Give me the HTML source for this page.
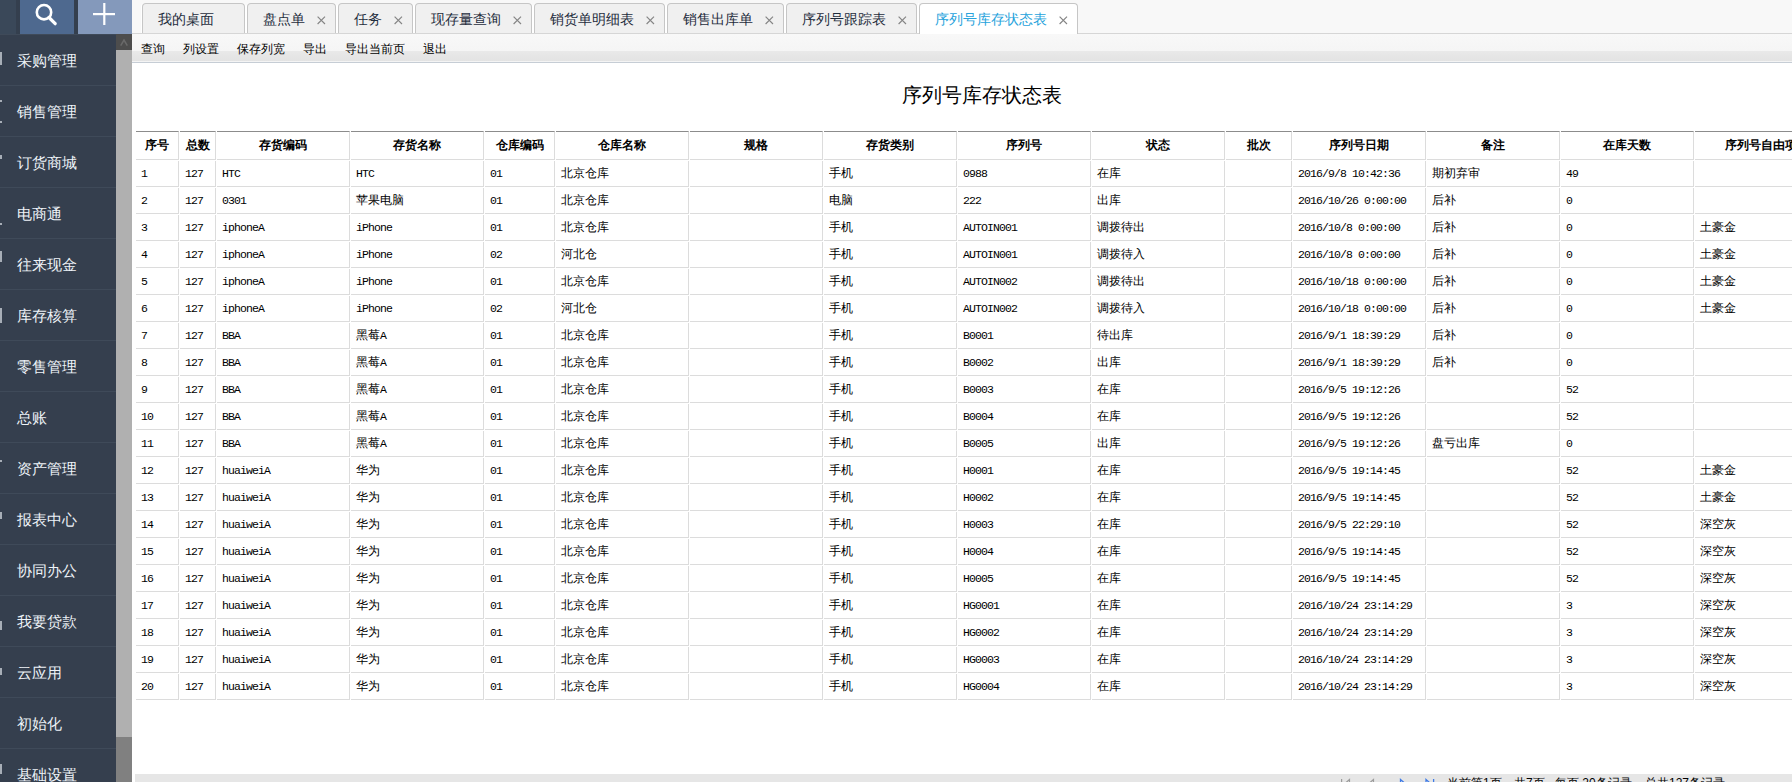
<!DOCTYPE html><html><head><meta charset="utf-8"><title>序列号库存状态表</title><style>
*{box-sizing:border-box}
html,body{margin:0;padding:0}
body{width:1792px;height:782px;overflow:hidden;position:relative;background:#fff;font-family:"Liberation Sans",sans-serif}
.abs{position:absolute}
#hdl{left:0;top:0;width:16px;height:34px;background:#3a4859}
#hdg{left:16px;top:0;width:116px;height:34px;background:#343f4e}
#srch{left:20px;top:0;width:54px;height:34px;background:#4e698f}
#plus{left:78px;top:0;width:54px;height:34px;background:#8499bb}
#side{left:0;top:34px;width:116px;height:748px;background:#353f4e;overflow:hidden}
#side .it{position:absolute;left:0;width:116px;height:51px;border-top:1px solid #3f4a59}
#side .it>span{position:absolute;left:17px;top:17px;font-size:15px;line-height:17px;color:#eef3f8;white-space:nowrap}
.frag{position:absolute;left:0;width:2px;background:#c4cad2;opacity:.8}
#sb{left:116px;top:34px;width:16px;height:748px;background:#b0b0b0}
#sbup{left:116px;top:34px;width:16px;height:16px;background:#4d4d4d}
#sbtr{left:116px;top:737px;width:16px;height:45px;background:#808080}
#tabbar{left:132px;top:0;width:1660px;height:34px;background:#f8f8f8;border-bottom:1px solid #d6d6d6}
.tab{position:absolute;top:3px;height:30px;border:1px solid #c6c6c6;border-bottom:none;border-radius:4px 4px 0 0;background:#f0f0f0;box-shadow:-1px 0 0 #fff,1px 0 0 #fff}
.tab>span{position:absolute;left:15px;top:7px;font-size:14px;line-height:16px;color:#1f2d3d;white-space:nowrap}
.tab.act{background:#fff;height:31px;box-shadow:none}
.tab.act>span{color:#27a3dc}
.tab svg{position:absolute;top:12px}
#tool{left:132px;top:34px;width:1660px;height:29px;background:linear-gradient(#f8f8f8 0,#f5f5f5 17px,#e9e9e9 17px,#e3e3e3 27px,#f4f4f4 27px,#f4f4f4 28px);border-bottom:1px solid #c6cdd5}
#tool>span{position:absolute;top:9px;font-size:12px;line-height:13px;color:#000;white-space:nowrap}
#title{left:862px;top:84px;width:240px;text-align:center;font-size:20px;line-height:22px;color:#000;white-space:nowrap}
#tbl{position:absolute;left:135px;top:130px;width:1694px;border-collapse:separate;border-spacing:1px;table-layout:fixed}
#tbl td,#tbl th{padding:0 0 0 5px;border-right:1px solid #dcdcdc;border-bottom:1px solid #dcdcdc;white-space:nowrap;overflow:hidden;font-size:12px;color:#000;text-align:left;vertical-align:middle}
#tbl th{height:29px;border-top:1px solid #8c8c8c;text-align:center;padding:0;font-weight:bold;line-height:27px}
#tbl td{height:26px;line-height:25px}
#tbl b{line-height:12px}
#tbl b{font-weight:normal;font-family:"Liberation Mono",monospace;font-size:11.5px;letter-spacing:-0.9px}
#pager{left:135px;top:774px;width:1657px;height:8px;background:#e6e6e6}
.nocjk .c{letter-spacing:.25em;-webkit-text-stroke:.6px currentColor;position:relative;left:.125em}
.nocjk #tbl th .c,.nocjk #title .c{margin-right:-.25em;left:0}
#pager>span{position:absolute;top:3px;font-size:12px;line-height:13px;color:#000;white-space:nowrap}
</style></head><body>
<script>(function(){var d=document,m=d.createElement("span");m.style.cssText="position:absolute;visibility:hidden;font:100px Liberation Sans;white-space:nowrap";m.textContent="\u4e2d\u4e2d\u4e2d\u4e2d";d.body.appendChild(m);if(m.getBoundingClientRect().width<350)d.documentElement.className="nocjk";d.body.removeChild(m)})();</script>
<div class="abs" id="hdg"></div><div class="abs" id="hdl"></div>
<div class="abs" id="srch"><svg width="54" height="34" viewBox="0 0 54 34"><circle cx="24" cy="12.2" r="7.2" fill="none" stroke="#fff" stroke-width="2.6"/><line x1="29" y1="17.5" x2="35.2" y2="23.7" stroke="#fff" stroke-width="3.2" stroke-linecap="round"/></svg></div>
<div class="abs" id="plus"><svg width="54" height="34" viewBox="0 0 54 34"><rect x="25.2" y="3" width="2.2" height="22" fill="#fff"/><rect x="15" y="13" width="22" height="2.2" fill="#fff"/></svg></div>
<div class="abs" id="side">
<div class="it" style="top:0px"><span><span class="c">采购管理</span></span></div>
<div class="it" style="top:51px"><span><span class="c">销售管理</span></span></div>
<div class="it" style="top:102px"><span><span class="c">订货商城</span></span></div>
<div class="it" style="top:153px"><span><span class="c">电商通</span></span></div>
<div class="it" style="top:204px"><span><span class="c">往来现金</span></span></div>
<div class="it" style="top:255px"><span><span class="c">库存核算</span></span></div>
<div class="it" style="top:306px"><span><span class="c">零售管理</span></span></div>
<div class="it" style="top:357px"><span><span class="c">总账</span></span></div>
<div class="it" style="top:408px"><span><span class="c">资产管理</span></span></div>
<div class="it" style="top:459px"><span><span class="c">报表中心</span></span></div>
<div class="it" style="top:510px"><span><span class="c">协同办公</span></span></div>
<div class="it" style="top:561px"><span><span class="c">我要贷款</span></span></div>
<div class="it" style="top:612px"><span><span class="c">云应用</span></span></div>
<div class="it" style="top:663px"><span><span class="c">初始化</span></span></div>
<div class="it" style="top:714px"><span><span class="c">基础设置</span></span></div>
<div class="frag" style="top:18px;height:13px"></div>
<div class="frag" style="top:66px;height:2px"></div>
<div class="frag" style="top:87px;height:2px"></div>
<div class="frag" style="top:121px;height:4px"></div>
<div class="frag" style="top:189px;height:2px"></div>
<div class="frag" style="top:217px;height:11px"></div>
<div class="frag" style="top:274px;height:15px"></div>
<div class="frag" style="top:426px;height:2px"></div>
<div class="frag" style="top:478px;height:7px"></div>
<div class="frag" style="top:587px;height:9px"></div>
<div class="frag" style="top:634px;height:7px"></div>
<div class="frag" style="top:730px;height:10px"></div>
</div>
<div class="abs" id="sb"></div><div class="abs" id="sbup"><svg width="16" height="16"><polyline points="4.7,11.6 8,6 11.3,11.6" fill="none" stroke="#6a6a6a" stroke-width="1.5"/></svg></div><div class="abs" id="sbtr"></div>
<div class="abs" id="tabbar"></div>
<div class="tab" style="left:142px;width:103px"><span><span class="c">我的桌面</span></span></div>
<div class="tab" style="left:247px;width:89px"><span><span class="c">盘点单</span></span><svg style="left:69px" width="9" height="9" viewBox="0 0 9 9"><path d="M0.6 0.6L8 8M8 0.6L0.6 8" stroke="#858585" stroke-width="1.15"/></svg></div>
<div class="tab" style="left:338px;width:75px"><span><span class="c">任务</span></span><svg style="left:55px" width="9" height="9" viewBox="0 0 9 9"><path d="M0.6 0.6L8 8M8 0.6L0.6 8" stroke="#858585" stroke-width="1.15"/></svg></div>
<div class="tab" style="left:415px;width:117px"><span><span class="c">现存量查询</span></span><svg style="left:97px" width="9" height="9" viewBox="0 0 9 9"><path d="M0.6 0.6L8 8M8 0.6L0.6 8" stroke="#858585" stroke-width="1.15"/></svg></div>
<div class="tab" style="left:534px;width:131px"><span><span class="c">销货单明细表</span></span><svg style="left:111px" width="9" height="9" viewBox="0 0 9 9"><path d="M0.6 0.6L8 8M8 0.6L0.6 8" stroke="#858585" stroke-width="1.15"/></svg></div>
<div class="tab" style="left:667px;width:117px"><span><span class="c">销售出库单</span></span><svg style="left:97px" width="9" height="9" viewBox="0 0 9 9"><path d="M0.6 0.6L8 8M8 0.6L0.6 8" stroke="#858585" stroke-width="1.15"/></svg></div>
<div class="tab" style="left:786px;width:131px"><span><span class="c">序列号跟踪表</span></span><svg style="left:111px" width="9" height="9" viewBox="0 0 9 9"><path d="M0.6 0.6L8 8M8 0.6L0.6 8" stroke="#858585" stroke-width="1.15"/></svg></div>
<div class="tab act" style="left:919px;width:159px"><span><span class="c">序列号库存状态表</span></span><svg style="left:139px" width="9" height="9" viewBox="0 0 9 9"><path d="M0.6 0.6L8 8M8 0.6L0.6 8" stroke="#858585" stroke-width="1.15"/></svg></div>
<div class="abs" style="left:918px;top:3px;width:1px;height:30px;background:#fff"></div>
<div class="abs" id="tool">
<span style="left:9px"><span class="c">查询</span></span>
<span style="left:51px"><span class="c">列设置</span></span>
<span style="left:105px"><span class="c">保存列宽</span></span>
<span style="left:171px"><span class="c">导出</span></span>
<span style="left:213px"><span class="c">导出当前页</span></span>
<span style="left:291px"><span class="c">退出</span></span>
</div>
<div class="abs" id="title"><span class="c">序列号库存状态表</span></div>
<table id="tbl"><colgroup>
<col style="width:43px">
<col style="width:36px">
<col style="width:133px">
<col style="width:133px">
<col style="width:70px">
<col style="width:133px">
<col style="width:133px">
<col style="width:133px">
<col style="width:133px">
<col style="width:133px">
<col style="width:66px">
<col style="width:133px">
<col style="width:133px">
<col style="width:133px">
<col style="width:133px">
</colgroup><tr>
<th><span class="c">序号</span></th>
<th><span class="c">总数</span></th>
<th><span class="c">存货编码</span></th>
<th><span class="c">存货名称</span></th>
<th><span class="c">仓库编码</span></th>
<th><span class="c">仓库名称</span></th>
<th><span class="c">规格</span></th>
<th><span class="c">存货类别</span></th>
<th><span class="c">序列号</span></th>
<th><span class="c">状态</span></th>
<th><span class="c">批次</span></th>
<th><span class="c">序列号日期</span></th>
<th><span class="c">备注</span></th>
<th><span class="c">在库天数</span></th>
<th><span class="c">序列号自由项</span></th>
</tr>
<tr><td><b>1</b></td><td><b>127</b></td><td><b>HTC</b></td><td><b>HTC</b></td><td><b>01</b></td><td><span class="c">北京仓库</span></td><td></td><td><span class="c">手机</span></td><td><b>0988</b></td><td><span class="c">在库</span></td><td></td><td><b>2016/9/8 10:42:36</b></td><td><span class="c">期初弃审</span></td><td><b>49</b></td><td></td></tr>
<tr><td><b>2</b></td><td><b>127</b></td><td><b>0301</b></td><td><span class="c">苹果电脑</span></td><td><b>01</b></td><td><span class="c">北京仓库</span></td><td></td><td><span class="c">电脑</span></td><td><b>222</b></td><td><span class="c">出库</span></td><td></td><td><b>2016/10/26 0:00:00</b></td><td><span class="c">后补</span></td><td><b>0</b></td><td></td></tr>
<tr><td><b>3</b></td><td><b>127</b></td><td><b>iphoneA</b></td><td><b>iPhone</b></td><td><b>01</b></td><td><span class="c">北京仓库</span></td><td></td><td><span class="c">手机</span></td><td><b>AUTOIN001</b></td><td><span class="c">调拨待出</span></td><td></td><td><b>2016/10/8 0:00:00</b></td><td><span class="c">后补</span></td><td><b>0</b></td><td><span class="c">土豪金</span></td></tr>
<tr><td><b>4</b></td><td><b>127</b></td><td><b>iphoneA</b></td><td><b>iPhone</b></td><td><b>02</b></td><td><span class="c">河北仓</span></td><td></td><td><span class="c">手机</span></td><td><b>AUTOIN001</b></td><td><span class="c">调拨待入</span></td><td></td><td><b>2016/10/8 0:00:00</b></td><td><span class="c">后补</span></td><td><b>0</b></td><td><span class="c">土豪金</span></td></tr>
<tr><td><b>5</b></td><td><b>127</b></td><td><b>iphoneA</b></td><td><b>iPhone</b></td><td><b>01</b></td><td><span class="c">北京仓库</span></td><td></td><td><span class="c">手机</span></td><td><b>AUTOIN002</b></td><td><span class="c">调拨待出</span></td><td></td><td><b>2016/10/18 0:00:00</b></td><td><span class="c">后补</span></td><td><b>0</b></td><td><span class="c">土豪金</span></td></tr>
<tr><td><b>6</b></td><td><b>127</b></td><td><b>iphoneA</b></td><td><b>iPhone</b></td><td><b>02</b></td><td><span class="c">河北仓</span></td><td></td><td><span class="c">手机</span></td><td><b>AUTOIN002</b></td><td><span class="c">调拨待入</span></td><td></td><td><b>2016/10/18 0:00:00</b></td><td><span class="c">后补</span></td><td><b>0</b></td><td><span class="c">土豪金</span></td></tr>
<tr><td><b>7</b></td><td><b>127</b></td><td><b>BBA</b></td><td><span class="c">黑莓</span><b>A</b></td><td><b>01</b></td><td><span class="c">北京仓库</span></td><td></td><td><span class="c">手机</span></td><td><b>B0001</b></td><td><span class="c">待出库</span></td><td></td><td><b>2016/9/1 18:39:29</b></td><td><span class="c">后补</span></td><td><b>0</b></td><td></td></tr>
<tr><td><b>8</b></td><td><b>127</b></td><td><b>BBA</b></td><td><span class="c">黑莓</span><b>A</b></td><td><b>01</b></td><td><span class="c">北京仓库</span></td><td></td><td><span class="c">手机</span></td><td><b>B0002</b></td><td><span class="c">出库</span></td><td></td><td><b>2016/9/1 18:39:29</b></td><td><span class="c">后补</span></td><td><b>0</b></td><td></td></tr>
<tr><td><b>9</b></td><td><b>127</b></td><td><b>BBA</b></td><td><span class="c">黑莓</span><b>A</b></td><td><b>01</b></td><td><span class="c">北京仓库</span></td><td></td><td><span class="c">手机</span></td><td><b>B0003</b></td><td><span class="c">在库</span></td><td></td><td><b>2016/9/5 19:12:26</b></td><td></td><td><b>52</b></td><td></td></tr>
<tr><td><b>10</b></td><td><b>127</b></td><td><b>BBA</b></td><td><span class="c">黑莓</span><b>A</b></td><td><b>01</b></td><td><span class="c">北京仓库</span></td><td></td><td><span class="c">手机</span></td><td><b>B0004</b></td><td><span class="c">在库</span></td><td></td><td><b>2016/9/5 19:12:26</b></td><td></td><td><b>52</b></td><td></td></tr>
<tr><td><b>11</b></td><td><b>127</b></td><td><b>BBA</b></td><td><span class="c">黑莓</span><b>A</b></td><td><b>01</b></td><td><span class="c">北京仓库</span></td><td></td><td><span class="c">手机</span></td><td><b>B0005</b></td><td><span class="c">出库</span></td><td></td><td><b>2016/9/5 19:12:26</b></td><td><span class="c">盘亏出库</span></td><td><b>0</b></td><td></td></tr>
<tr><td><b>12</b></td><td><b>127</b></td><td><b>huaiweiA</b></td><td><span class="c">华为</span></td><td><b>01</b></td><td><span class="c">北京仓库</span></td><td></td><td><span class="c">手机</span></td><td><b>H0001</b></td><td><span class="c">在库</span></td><td></td><td><b>2016/9/5 19:14:45</b></td><td></td><td><b>52</b></td><td><span class="c">土豪金</span></td></tr>
<tr><td><b>13</b></td><td><b>127</b></td><td><b>huaiweiA</b></td><td><span class="c">华为</span></td><td><b>01</b></td><td><span class="c">北京仓库</span></td><td></td><td><span class="c">手机</span></td><td><b>H0002</b></td><td><span class="c">在库</span></td><td></td><td><b>2016/9/5 19:14:45</b></td><td></td><td><b>52</b></td><td><span class="c">土豪金</span></td></tr>
<tr><td><b>14</b></td><td><b>127</b></td><td><b>huaiweiA</b></td><td><span class="c">华为</span></td><td><b>01</b></td><td><span class="c">北京仓库</span></td><td></td><td><span class="c">手机</span></td><td><b>H0003</b></td><td><span class="c">在库</span></td><td></td><td><b>2016/9/5 22:29:10</b></td><td></td><td><b>52</b></td><td><span class="c">深空灰</span></td></tr>
<tr><td><b>15</b></td><td><b>127</b></td><td><b>huaiweiA</b></td><td><span class="c">华为</span></td><td><b>01</b></td><td><span class="c">北京仓库</span></td><td></td><td><span class="c">手机</span></td><td><b>H0004</b></td><td><span class="c">在库</span></td><td></td><td><b>2016/9/5 19:14:45</b></td><td></td><td><b>52</b></td><td><span class="c">深空灰</span></td></tr>
<tr><td><b>16</b></td><td><b>127</b></td><td><b>huaiweiA</b></td><td><span class="c">华为</span></td><td><b>01</b></td><td><span class="c">北京仓库</span></td><td></td><td><span class="c">手机</span></td><td><b>H0005</b></td><td><span class="c">在库</span></td><td></td><td><b>2016/9/5 19:14:45</b></td><td></td><td><b>52</b></td><td><span class="c">深空灰</span></td></tr>
<tr><td><b>17</b></td><td><b>127</b></td><td><b>huaiweiA</b></td><td><span class="c">华为</span></td><td><b>01</b></td><td><span class="c">北京仓库</span></td><td></td><td><span class="c">手机</span></td><td><b>HG0001</b></td><td><span class="c">在库</span></td><td></td><td><b>2016/10/24 23:14:29</b></td><td></td><td><b>3</b></td><td><span class="c">深空灰</span></td></tr>
<tr><td><b>18</b></td><td><b>127</b></td><td><b>huaiweiA</b></td><td><span class="c">华为</span></td><td><b>01</b></td><td><span class="c">北京仓库</span></td><td></td><td><span class="c">手机</span></td><td><b>HG0002</b></td><td><span class="c">在库</span></td><td></td><td><b>2016/10/24 23:14:29</b></td><td></td><td><b>3</b></td><td><span class="c">深空灰</span></td></tr>
<tr><td><b>19</b></td><td><b>127</b></td><td><b>huaiweiA</b></td><td><span class="c">华为</span></td><td><b>01</b></td><td><span class="c">北京仓库</span></td><td></td><td><span class="c">手机</span></td><td><b>HG0003</b></td><td><span class="c">在库</span></td><td></td><td><b>2016/10/24 23:14:29</b></td><td></td><td><b>3</b></td><td><span class="c">深空灰</span></td></tr>
<tr><td><b>20</b></td><td><b>127</b></td><td><b>huaiweiA</b></td><td><span class="c">华为</span></td><td><b>01</b></td><td><span class="c">北京仓库</span></td><td></td><td><span class="c">手机</span></td><td><b>HG0004</b></td><td><span class="c">在库</span></td><td></td><td><b>2016/10/24 23:14:29</b></td><td></td><td><b>3</b></td><td><span class="c">深空灰</span></td></tr>
</table>
<div class="abs" id="pager">
<svg class="abs" style="left:1200px;top:0" width="110" height="8"><g fill="none" stroke="#9c9c9c" stroke-width="1.2"><path d="M6.6 5V13"/><path d="M14.5 5.5L10.5 9L14.5 12.5Z"/><path d="M38.5 5.5L34.5 9L38.5 12.5Z"/></g><g fill="none" stroke="#3f7be6" stroke-width="1.3"><path d="M65.5 5.5L69.5 9L65.5 12.5Z"/><path d="M91 5.5L95 9L91 12.5Z"/><path d="M98.6 5V13"/></g></svg>
<span style="left:1312px"><span class="c">当前第</span>1<span class="c">页</span></span>
<span style="left:1379px"><span class="c">共</span>7<span class="c">页</span></span>
<span style="left:1420px"><span class="c">每页</span> 20<span class="c">条记录</span></span>
<span style="left:1510px"><span class="c">总共</span>127<span class="c">条记录</span></span>
</div>
</body></html>
